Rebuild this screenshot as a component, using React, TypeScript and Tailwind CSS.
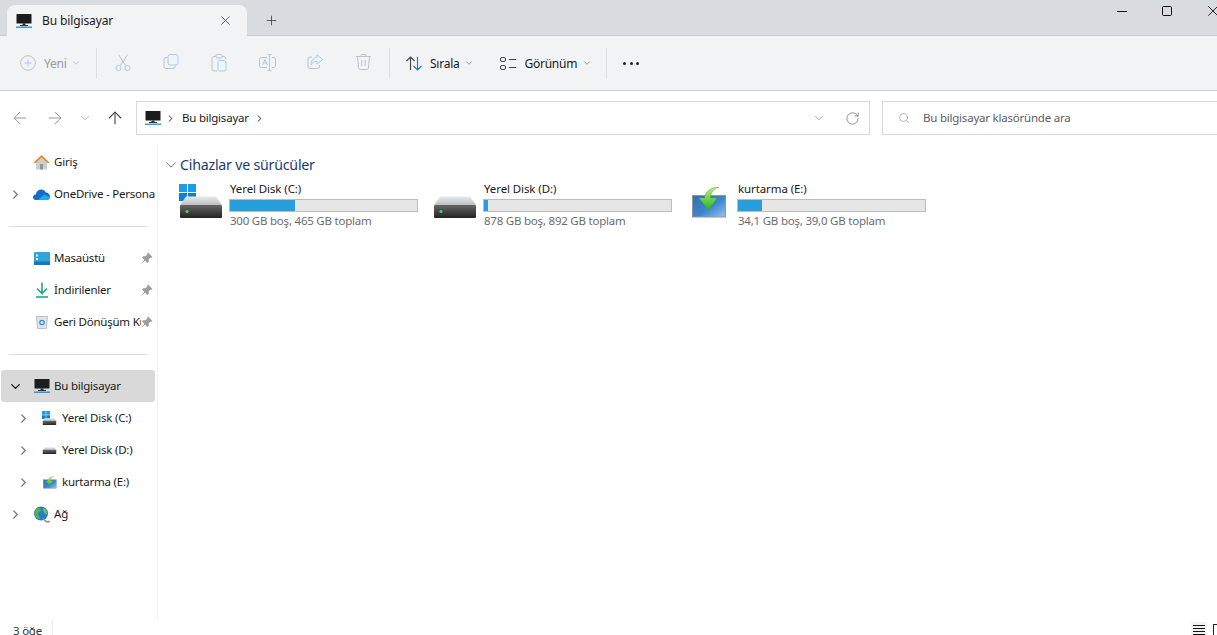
import React, { useId } from "react";
import { ChevronDown, ChevronRight, X, Plus, ArrowLeft, ArrowRight, ArrowUp, RotateCw, Search } from "lucide-react";

const GREY = "#bfc2c5";
const BLUE = "#a4cdf0";

function Monitor({ className = "" }: { className?: string }) {
  return (
    <svg viewBox="0 0 16 14" className={className}>
      <rect x="0.5" y="0" width="15" height="9.5" rx="0.5" fill="#1c1c1c" />
      <rect x="6.5" y="9.5" width="3" height="1.5" fill="#333" />
      <rect x="4" y="11" width="8" height="1" fill="#333" />
      <rect x="0" y="12.6" width="16" height="1.2" fill="#0a84d6" />
    </svg>
  );
}

function WinLogo({ size = 17 }: { size?: number }) {
  return (
    <svg viewBox="0 0 17 17" width={size} height={size} className="block">
      <rect x="0" y="0" width="8" height="8" fill="#1f9be8" />
      <rect x="9" y="0" width="8" height="8" fill="#1f9be8" />
      <rect x="0" y="9" width="8" height="8" fill="#0f7fd0" />
      <rect x="9" y="9" width="8" height="8" fill="#0f7fd0" />
    </svg>
  );
}

function Hdd({ w = 42, h = 22 }: { w?: number; h?: number }) {
  const id = useId();
  return (
    <svg viewBox="0 0 42 22" width={w} height={h} className="block">
      <defs>
        <linearGradient id={id + "t"} x1="0" y1="0" x2="0" y2="1">
          <stop offset="0" stopColor="#e8eaec" />
          <stop offset="1" stopColor="#bcc0c3" />
        </linearGradient>
        <linearGradient id={id + "b"} x1="0" y1="0" x2="0" y2="1">
          <stop offset="0" stopColor="#666" />
          <stop offset="1" stopColor="#232323" />
        </linearGradient>
      </defs>
      <path d="M6 0.5 H36 L42 9 H0 Z" fill={"url(#" + id + "t)"} />
      <rect x="0" y="9" width="42" height="13" rx="1" fill={"url(#" + id + "b)"} />
      <circle cx="7" cy="15.5" r="1.5" fill="#3fe04c" />
    </svg>
  );
}

function Recovery({ w = 35, h = 31 }: { w?: number; h?: number }) {
  const id = useId();
  return (
    <svg viewBox="0 0 35 31" width={w} height={h} className="block">
      <defs>
        <linearGradient id={id + "s"} x1="0" y1="0" x2="1" y2="1">
          <stop offset="0" stopColor="#2f6fb4" />
          <stop offset="0.55" stopColor="#3f86cc" />
          <stop offset="1" stopColor="#9cc4ea" />
        </linearGradient>
        <linearGradient id={id + "a"} x1="0" y1="0" x2="0" y2="1">
          <stop offset="0" stopColor="#c4f080" />
          <stop offset="1" stopColor="#22b522" />
        </linearGradient>
      </defs>
      <rect x="0.5" y="8.5" width="33" height="21.5" fill={"url(#" + id + "s)"} stroke="#8f979c" />
      <path
        d="M27 0 C21 2 18.5 6 18.5 11 L25 11 L16.5 23 L7 11 L12.5 11 C13 5 19 0 27 0 Z"
        fill={"url(#" + id + "a)"}
        stroke="#3fa03a"
        strokeWidth="0.5"
      />
    </svg>
  );
}

function Home() {
  return (
    <svg viewBox="0 0 17 16" width={17} height={16} className="block">
      <path d="M3 8 L8.5 3 L14 8 V15.5 H3 Z" fill="#c9ced3" />
      <rect x="7" y="10" width="3" height="5.5" fill="#8f979e" />
      <path d="M0.5 8.5 L8.5 1 L16.5 8.5 L15 9.5 L8.5 3.6 L2 9.5 Z" fill="#ef8a2a" />
    </svg>
  );
}

function Cloud() {
  return (
    <svg viewBox="0 0 17 11" width={17} height={11} className="block">
      <path d="M3 11 C1 11 0 9.6 0 8.2 C0 6.6 1.2 5.5 2.8 5.4 C3.4 2.4 5.6 0.5 8.2 0.5 C10.4 0.5 12 1.6 12.8 3.6 C15 3.6 17 5.4 17 7.6 C17 9.6 15.6 11 13.6 11 Z" fill="#0f6fc6" />
      <path d="M5 11 L11 5.5 L17 8 C17 9.8 15.6 11 13.6 11 Z" fill="#2aa5ea" />
    </svg>
  );
}

function Desktop() {
  return (
    <svg viewBox="0 0 16 13" width={16} height={13} className="block">
      <rect x="0" y="0" width="16" height="13" rx="1" fill="#2fa4dd" />
      <rect x="0" y="9.5" width="16" height="3.5" fill="#1479b8" />
      <rect x="2" y="2.5" width="2" height="2" fill="#e8f6ff" />
      <rect x="2" y="6" width="2" height="2" fill="#e8f6ff" />
    </svg>
  );
}

function Download() {
  return (
    <svg viewBox="0 0 14 16" width={14} height={16} className="block" fill="none" stroke="#1fae7c" strokeWidth="1.6">
      <path d="M7 0.5 V11 M2 6.5 L7 11.5 L12 6.5" />
      <path d="M1 15 H13" />
    </svg>
  );
}

function Bin() {
  return (
    <svg viewBox="0 0 12 14" width={12} height={14} className="block">
      <path d="M0.5 1.5 H11.5 L10.4 13.5 H1.6 Z" fill="#dfe4e8" stroke="#a5adb3" strokeWidth="0.7" />
      <circle cx="6" cy="7.5" r="2.2" fill="none" stroke="#2b8fd0" strokeWidth="1.2" />
    </svg>
  );
}

function Globe() {
  return (
    <svg viewBox="0 0 17 17" width={17} height={17} className="block">
      <circle cx="8" cy="7.5" r="7" fill="#2c7ec4" />
      <path d="M3 3 C6 1 8 2 8 4 C8 6 5 6 5 8 C5 10 7 10 7 13 C4 13 1 10 1.5 6 Z" fill="#58b04a" />
      <path d="M10 2 C13 3 14.5 6 14 8 C12 8 10 6 10 2 Z" fill="#7cc15e" />
      <path d="M10 12 L14 15 L16.5 14.5 L17 16.5 L13 16.5 L9.5 13 Z" fill="#8b9299" />
    </svg>
  );
}

function Pin() {
  return (
    <svg viewBox="0 0 12 12" width={12} height={12} className="block">
      <path d="M7 0.5 L11.5 5 L10 6 L9.4 5.6 L7.8 7.6 L7.8 9.8 L6.4 11 L4.2 8.6 L0.8 11.4 L0.6 11.2 L3.4 7.8 L1 5.6 L2.2 4.2 L4.4 4.2 L6.4 2.6 L6 2 Z" fill="#9c9c9c" />
    </svg>
  );
}

const toolIcons: React.ReactNode[] = [
  <svg key="cut" viewBox="0 0 16 18" width={16} height={18} fill="none" strokeWidth="1">
    <path d="M3.5 0.5 L10.5 11.5 M12.5 0.5 L5.5 11.5" stroke={GREY} />
    <circle cx="3.5" cy="14" r="2.6" stroke={BLUE} />
    <circle cx="12.5" cy="14" r="2.6" stroke={BLUE} />
  </svg>,
  <svg key="copy" viewBox="0 0 16 16" width={16} height={16} fill="none" strokeWidth="1">
    <path d="M4.5 3.5 H3 A2 2 0 0 0 1 5.5 V12.5 A2 2 0 0 0 3 14.5 H10 A2 2 0 0 0 12 12.5 V11.5" stroke={GREY} />
    <rect x="5" y="0.5" width="10" height="10.5" rx="2" stroke={BLUE} />
  </svg>,
  <svg key="paste" viewBox="0 0 16 18" width={16} height={18} fill="none" strokeWidth="1">
    <path d="M5 2.5 H3 A2 2 0 0 0 1 4.5 V15 A2 2 0 0 0 3 17 H6 M11 2.5 H13 A1.5 1.5 0 0 1 14.5 4 V5" stroke={GREY} />
    <rect x="5" y="0.5" width="6" height="3.5" rx="1" stroke={GREY} />
    <rect x="7" y="6.5" width="8" height="10.5" rx="1.5" stroke={BLUE} />
  </svg>,
  <svg key="rename" viewBox="0 0 17 17" width={17} height={17} fill="none" strokeWidth="1">
    <path d="M8 3.5 H2.5 A2 2 0 0 0 0.5 5.5 V11.5 A2 2 0 0 0 2.5 13.5 H8 M13 3.5 H14.5 A2 2 0 0 1 16.5 5.5 V11.5 A2 2 0 0 1 14.5 13.5 H13" stroke={GREY} />
    <path d="M8.5 0.5 H12.5 M10.5 0.5 V16.5 M8.5 16.5 H12.5" stroke={BLUE} />
    <path d="M3.5 11 L6 5.5 L8.5 11 M4.4 9 H7.6" stroke={BLUE} />
  </svg>,
  <svg key="share" viewBox="0 0 16 16" width={16} height={16} fill="none" strokeWidth="1">
    <path d="M5 3 H3 A2 2 0 0 0 1 5 V12.5 A2 2 0 0 0 3 14.5 H10.5 A2 2 0 0 0 12.5 12.5 V11" stroke={GREY} />
    <path d="M10 0.8 L15.5 5.5 L10 10 V7.5 C7 7.5 5.2 8.5 4 11 C4 7 6 4 10 3.5 Z" stroke={BLUE} />
  </svg>,
  <svg key="trash" viewBox="0 0 15 16" width={15} height={16} fill="none" strokeWidth="1" stroke={GREY}>
    <path d="M0 2.5 H15 M5 2.5 V1.5 A1 1 0 0 1 6 0.5 H9 A1 1 0 0 1 10 1.5 V2.5" />
    <path d="M1.5 2.5 L2.5 13.5 A2 2 0 0 0 4.5 15.5 H10.5 A2 2 0 0 0 12.5 13.5 L13.5 2.5" />
    <path d="M5.8 6 V12 M9.2 6 V12" />
  </svg>,
];

function Sep() {
  return <div className="w-px h-[31px] bg-[#dcdee0] shrink-0" />;
}

type NavRowProps = {
  label: string;
  icon: React.ReactNode;
  depth?: number;
  chevron?: "right" | "down";
  pinned?: boolean;
  active?: boolean;
};

function NavRow({ label, icon, depth = 0, chevron, pinned, active }: NavRowProps) {
  return (
    <div className={"ml-px w-[154px] h-8 flex items-center rounded-[3px] " + (active ? "bg-[#d9d9d9]" : "")} style={{ paddingLeft: 6 + depth * 8 }}>
      <div className="w-4 shrink-0 flex justify-center">
        {chevron === "right" && <ChevronRight size={15} color="#777" strokeWidth={1.7} />}
        {chevron === "down" && <ChevronDown size={15} color="#1a1a1a" strokeWidth={2.2} />}
      </div>
      <div className="w-[17px] ml-[10px] shrink-0 flex justify-center">{icon}</div>
      <div className="ml-1 flex-1 min-w-0 overflow-hidden whitespace-nowrap text-[#1a1a1a]">{label}</div>
      {pinned && <div className="w-3 shrink-0 mr-[2px]"><Pin /></div>}
    </div>
  );
}

function NavDivider() {
  return (
    <div className="h-8 flex items-center pl-[9px]">
      <div className="w-[138px] h-px bg-[#dcdcdc]" />
    </div>
  );
}

type Drive = { name: string; detail: string; pct: number; icon: React.ReactNode };

const drives: Drive[] = [
  {
    name: "Yerel Disk (C:)",
    detail: "300 GB boş, 465 GB toplam",
    pct: 35,
    icon: (
      <div className="w-[53px] shrink-0 flex flex-col pl-[3px] pt-[5px]">
        <WinLogo />
        <div className="mt-[-5px] ml-px"><Hdd /></div>
      </div>
    ),
  },
  {
    name: "Yerel Disk (D:)",
    detail: "878 GB boş, 892 GB toplam",
    pct: 2,
    icon: (
      <div className="w-[53px] shrink-0 pl-1 pt-[17px]"><Hdd /></div>
    ),
  },
  {
    name: "kurtarma (E:)",
    detail: "34,1 GB boş, 39,0 GB toplam",
    pct: 13,
    icon: (
      <div className="w-[53px] shrink-0 pl-2 pt-[8px]"><Recovery /></div>
    ),
  },
];

export default function App() {
  return (
    <div className="w-[1217px] h-[635px] overflow-hidden flex flex-col bg-white text-[11.5px] tracking-[-0.22px] text-[#1a1a1a]" style={{ fontFamily: '"Noto Sans", sans-serif' }}>
      {/* title bar */}
      <div className="h-9 shrink-0 bg-[#d8dbdf] border-b border-[#c9cbce] flex relative">
        <div className="ml-[7px] mt-[5px] w-[240px] h-[31px] bg-[#f2f3f5] rounded-t-lg flex items-center pl-[9px] z-10">
          <Monitor className="w-4 h-[14px]" />
          <span className="ml-[10px] flex-1 text-[12px] tracking-[-0.12px]">Bu bilgisayar</span>
          <X size={15} strokeWidth={1.2} color="#333" className="mr-[14px]" />
        </div>
        <Plus size={15} strokeWidth={1.2} color="#333" className="ml-[17px] mt-[13px]" />
        <div className="ml-auto mr-[-1px] flex items-start mt-[6px]">
          <svg viewBox="0 0 10 10" width={10} height={10} fill="none" stroke="#111" strokeWidth="1">
            <path d="M0 5.5 H10" />
          </svg>
          <svg viewBox="0 0 10 10" width={10} height={10} fill="none" stroke="#111" strokeWidth="1" className="ml-[35px]">
            <rect x="0.5" y="0.5" width="9" height="9" rx="1.2" />
          </svg>
          <svg viewBox="0 0 10 10" width={10} height={10} fill="none" stroke="#111" strokeWidth="0.9" className="ml-[36px]">
            <path d="M0.3 0.3 L9.7 9.7 M9.7 0.3 L0.3 9.7" />
          </svg>
        </div>
      </div>

      {/* toolbar */}
      <div className="h-[55px] shrink-0 bg-[#f2f3f5] border-b border-[#cfd0d2] flex items-center text-[12px] tracking-[-0.25px]">
        <div className="w-[96px] flex items-center pl-5 text-[#9a9a9a]">
          <svg viewBox="0 0 16 16" width={16} height={16} fill="none" strokeWidth="1">
            <circle cx="8" cy="8" r="7.3" stroke={GREY} />
            <path d="M8 4.5 V11.5 M4.5 8 H11.5" stroke={BLUE} />
          </svg>
          <span className="ml-2 pt-px">Yeni</span>
          <ChevronDown size={10} color="#b5b5b5" className="ml-[5px]" />
        </div>
        <Sep />
        <div className="ml-[2px] flex">
          {toolIcons.map((icon, i) => (
            <div key={i} className="w-12 flex justify-center">{icon}</div>
          ))}
        </div>
        <div className="ml-[2px]"><Sep /></div>
        <div className="ml-4 flex items-center">
          <svg viewBox="0 0 16 15" width={16} height={15} fill="none" strokeWidth="1.1">
            <path d="M0.5 5 L4.5 1 L8.5 5 M4.5 1 V14" stroke="#444" />
            <path d="M7.5 10 L11.5 14 L15.5 10 M11.5 1 V14" stroke="#1478d4" />
          </svg>
          <span className="ml-2 pt-px">Sırala</span>
          <ChevronDown size={10} color="#8a8a8a" className="ml-[5px]" />
        </div>
        <div className="ml-[26px] flex items-center">
          <svg viewBox="0 0 16 13" width={16} height={13} fill="none" strokeWidth="1" stroke="#444">
            <rect x="0.5" y="0.5" width="5" height="4" rx="1.5" />
            <rect x="0.5" y="8.5" width="5" height="4" rx="1.5" />
            <path d="M9 2.5 H16 M9 10.5 H16" />
          </svg>
          <span className="ml-2 pt-px">Görünüm</span>
          <ChevronDown size={10} color="#8a8a8a" className="ml-[5px]" />
        </div>
        <div className="ml-[14px]"><Sep /></div>
        <div className="ml-4 flex gap-[3.5px] pt-px">
          <div className="w-[3px] h-[3px] rounded-full bg-[#222]" />
          <div className="w-[3px] h-[3px] rounded-full bg-[#222]" />
          <div className="w-[3px] h-[3px] rounded-full bg-[#222]" />
        </div>
      </div>

      {/* address row */}
      <div className="h-[55px] shrink-0 flex items-start pt-[10px]">
        <div className="w-[136px] h-[34px] shrink-0 flex items-center text-[#999]">
          <ArrowLeft size={20} strokeWidth={1.2} className="ml-[10px]" />
          <ArrowRight size={20} strokeWidth={1.2} className="ml-[15px]" />
          <ChevronDown size={14} strokeWidth={1.4} className="ml-[13px]" />
          <ArrowUp size={20} strokeWidth={1.3} color="#444" className="ml-[13px]" />
        </div>
        <div className="w-[734px] h-[34px] shrink-0 border border-[#d9d9d9] flex items-center pl-2">
          <Monitor className="w-4 h-[14px]" />
          <ChevronRight size={11} strokeWidth={2.2} color="#555" className="ml-1" />
          <span className="ml-[6px]">Bu bilgisayar</span>
          <ChevronRight size={11} strokeWidth={2.2} color="#555" className="ml-[5px]" />
          <div className="ml-auto flex items-center text-[#777]">
            <ChevronDown size={14} strokeWidth={1.2} className="mr-px" />
            <RotateCw size={15} strokeWidth={1.3} className="ml-[18px] mr-[9px]" />
          </div>
        </div>
        <div className="ml-3 flex-1 h-[34px] mr-[-4px] border border-[#d9d9d9] flex items-center pl-[15px] text-[#5e5e5e]">
          <Search size={12} strokeWidth={1.2} color="#8a8a8a" />
          <span className="ml-[13px]">Bu bilgisayar klasöründe ara</span>
        </div>
      </div>

      {/* body */}
      <div className="flex-1 min-h-0 flex">
        <div className="w-[158px] shrink-0 border-r border-[#f2f2f2] overflow-hidden">
          <NavRow label="Giriş" icon={<Home />} />
          <NavRow label="OneDrive - Personal" icon={<Cloud />} chevron="right" />
          <NavDivider />
          <NavRow label="Masaüstü" icon={<Desktop />} pinned />
          <NavRow label="İndirilenler" icon={<Download />} pinned />
          <NavRow label="Geri Dönüşüm Kutusu" icon={<Bin />} pinned />
          <NavDivider />
          <NavRow label="Bu bilgisayar" icon={<Monitor className="w-4 h-[14px]" />} chevron="down" active />
          <NavRow
            label="Yerel Disk (C:)"
            depth={1}
            chevron="right"
            icon={
              <div className="flex flex-col">
                <WinLogo size={8} />
                <div className="mt-[-1px]"><Hdd w={15} h={7} /></div>
              </div>
            }
          />
          <NavRow label="Yerel Disk (D:)" depth={1} chevron="right" icon={<Hdd w={15} h={7} />} />
          <NavRow label="kurtarma (E:)" depth={1} chevron="right" icon={<Recovery w={14} h={13} />} />
          <NavRow label="Ağ" icon={<Globe />} chevron="right" />
        </div>

        <div className="flex-1 min-w-0 pl-2 pt-[9px]">
          <div className="flex items-center h-5">
            <svg viewBox="0 0 10 6" width={10} height={6} fill="none" stroke="#666" strokeWidth="0.9">
              <path d="M0.3 0.5 L5 5.2 L9.7 0.5" />
            </svg>
            <span className="ml-1 text-[14.2px] text-[#1c3a78]">Cihazlar ve sürücüler</span>
          </div>
          <div className="flex ml-[2px] mt-1">
            {drives.map((d) => (
              <div key={d.name} className="w-[254px] h-[54px] flex ml-2 mr-[-8px]">
                {d.icon}
                <div className="w-[189px]">
                  <div className="pl-px h-5 leading-5 tracking-[-0.1px]">{d.name}</div>
                  <div className="h-[13px] bg-[#e6e6e6] border border-[#bcbcbc]">
                    <div className="h-full bg-[#26a0da]" style={{ width: d.pct + "%" }} />
                  </div>
                  <div className="pl-px leading-[18px] text-[#6d6d6d]">{d.detail}</div>
                </div>
              </div>
            ))}
          </div>
        </div>
      </div>

      {/* status bar */}
      <div className="h-[15px] shrink-0 flex items-start overflow-hidden">
        <div className="pl-[13px] w-[53px] h-[15px] pt-[3px] border-r border-[#ececec] leading-[16px] text-[#333]">3 öğe</div>
        <div className="ml-auto mt-[2px] w-4 h-[13px] bg-[#f2f2f2] flex flex-col gap-[2px] px-[2px] pt-[3px]">
          <div className="h-px bg-[#111]" />
          <div className="h-px bg-[#111]" />
          <div className="h-px bg-[#111]" />
          <div className="h-px bg-[#111]" />
        </div>
        <div className="ml-[6px] mr-[-8px] mt-[4px] w-[12px] h-[12px] border border-[#222]" />
      </div>
    </div>
  );
}
